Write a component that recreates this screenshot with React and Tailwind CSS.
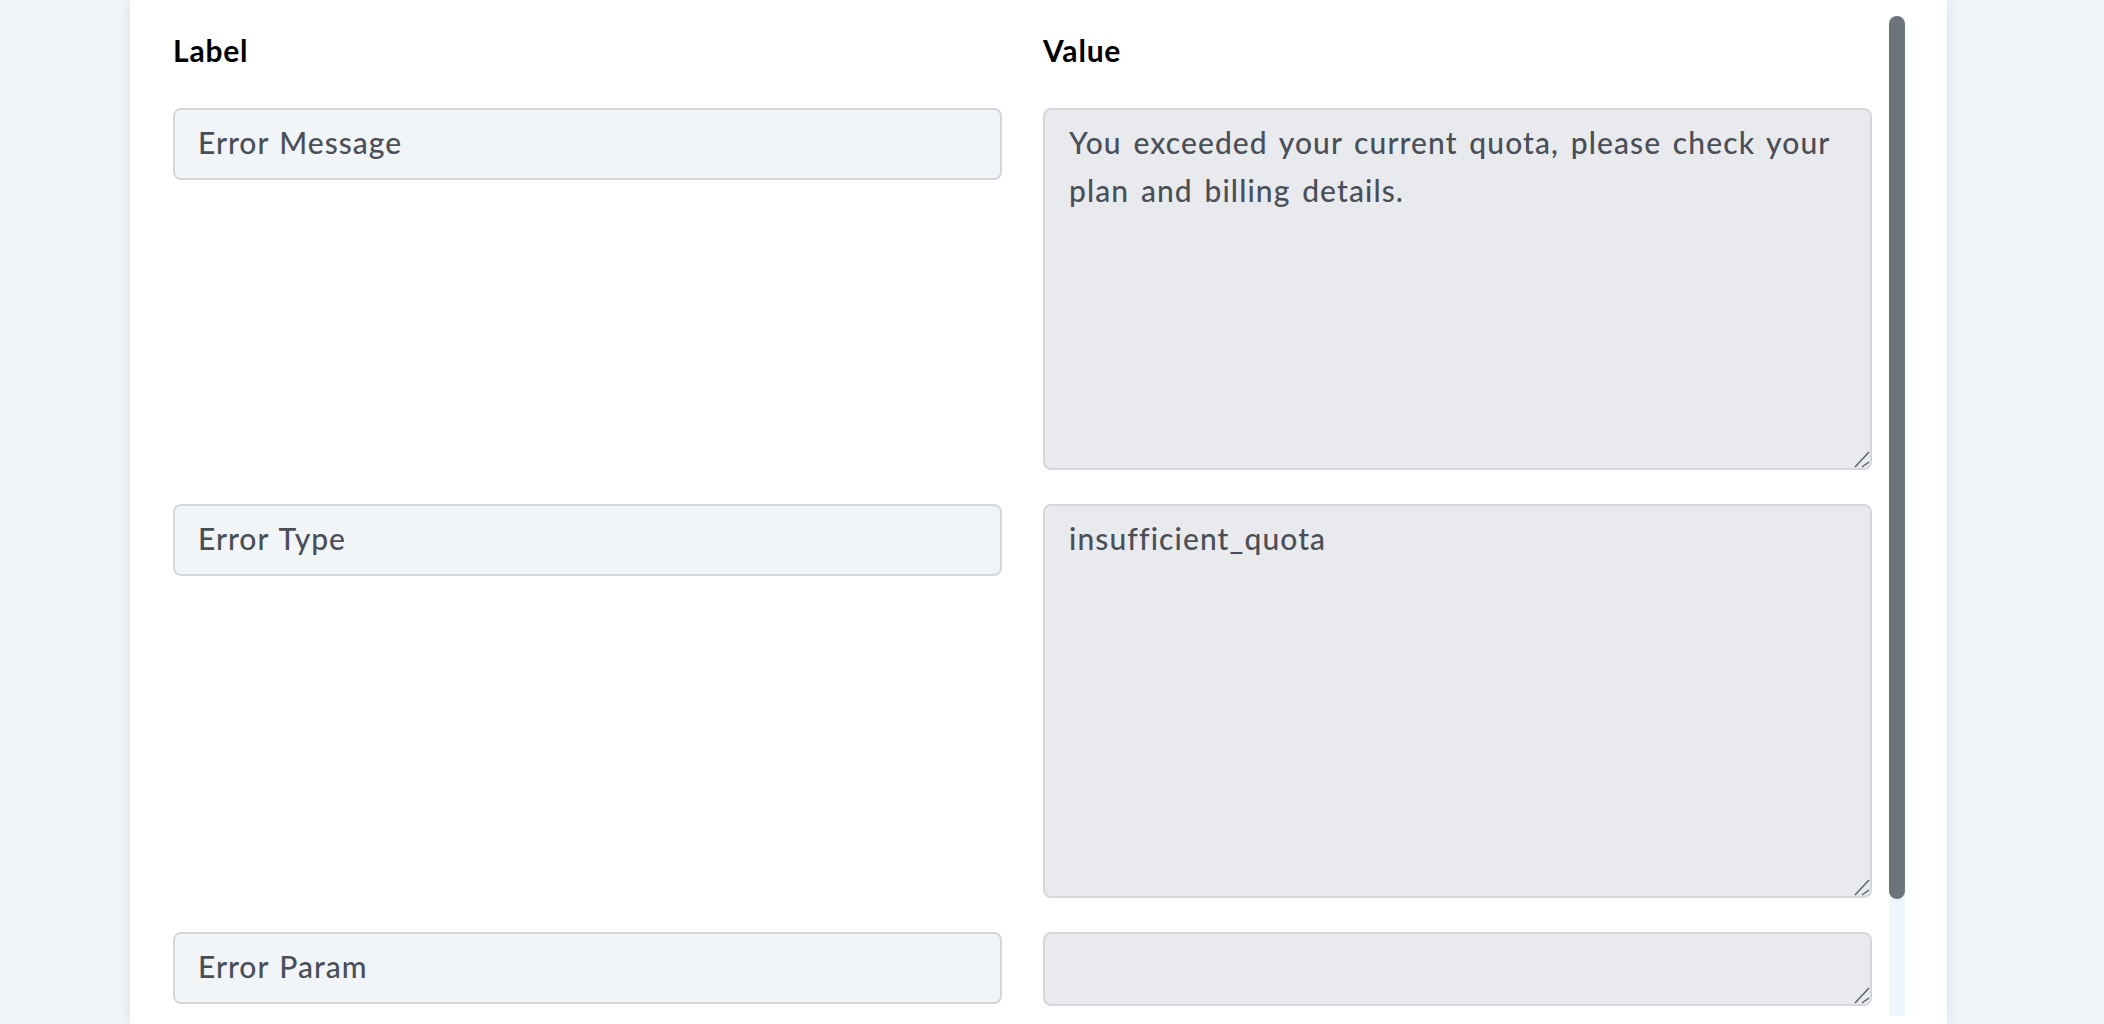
import React from "react";

const rows = [
  {
    label: "Error Message",
    value: "You exceeded your current quota, please check your plan and billing details.",
    h: "h-[362px]",
  },
  { label: "Error Type", value: "insufficient_quota", h: "h-[394px]" },
  { label: "Error Param", value: "", h: "h-[74px]" },
];

const font = { fontFamily: "Lato, 'Noto Sans', sans-serif" };

// Diagonal resize grip drawn in the textarea's lower-right corner
function Grip() {
  return (
    <svg
      className="pointer-events-none absolute right-0 bottom-0"
      width="20"
      height="20"
      viewBox="0 0 20 20"
    >
      <line x1="3" y1="17" x2="17" y2="2" stroke="#5b5f66" strokeWidth="1.4" />
      <line x1="10" y1="17" x2="17" y2="12" stroke="#5b5f66" strokeWidth="1.4" />
    </svg>
  );
}

export default function App() {
  return (
    <div className="h-[1024px] overflow-hidden bg-[#f1f4f8]" style={font}>
      <div className="ml-[130px] w-[1817px] h-[1024px] bg-white shadow-[0_0_12px_rgba(30,41,59,0.10)] pt-4 pl-[43px] pr-[42px]">
        <div className="h-[1000px] flex overflow-hidden">
          <div className="flex-1 min-w-0 pr-[17px] pt-4">
            <div className="grid grid-cols-2 gap-x-[41px] mb-10">
              <div className="text-[30px] leading-[36px] font-bold tracking-[0.8px] text-black">Label</div>
              <div className="text-[30px] leading-[36px] font-bold tracking-[0.8px] text-black">Value</div>
            </div>
            <div className="flex flex-col gap-[34px]">
              {rows.map((r) => (
                <div key={r.label} className="grid grid-cols-2 gap-x-[41px] items-start">
                  <input
                    readOnly
                    value={r.label}
                    className="h-[72px] w-full rounded-lg border-2 border-[#d3d7dc] bg-[#f2f5f8] pl-[23px] pr-6 pb-1 text-[30px] font-medium tracking-[1px] [word-spacing:2px] text-[#4a4f57] outline-none"
                    style={font}
                  />
                  <div className="relative">
                    <textarea
                      readOnly
                      value={r.value}
                      className={`${r.h} block w-full resize-none rounded-lg border-2 border-[#d3d7dc] bg-[#e9eaee] px-6 pt-[9px] text-[30px] font-medium tracking-[1.1px] [word-spacing:3px] leading-[47.5px] text-[#4a4f57] outline-none`}
                      style={font}
                    />
                    <Grip />
                  </div>
                </div>
              ))}
            </div>
          </div>
          {/* vertical scrollbar */}
          <div className="w-4 h-full bg-[#eef5fd] rounded-t-lg">
            <div className="h-[883px] w-full rounded-full bg-[#6c737a]" />
          </div>
        </div>
      </div>
    </div>
  );
}
